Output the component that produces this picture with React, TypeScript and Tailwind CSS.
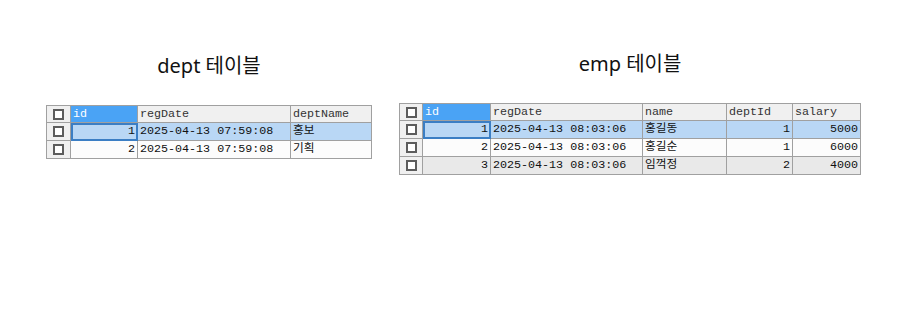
import React from 'react';

type Col = { key: string; w: number; right?: boolean };

const deptCols: Col[] = [
  { key: 'id', w: 67, right: true },
  { key: 'regDate', w: 153 },
  { key: 'deptName', w: 81 },
];

const deptRows = [
  ['1', '2025-04-13 07:59:08', '홍보'],
  ['2', '2025-04-13 07:59:08', '기획'],
];

const empCols: Col[] = [
  { key: 'id', w: 68, right: true },
  { key: 'regDate', w: 152 },
  { key: 'name', w: 84 },
  { key: 'deptId', w: 66, right: true },
  { key: 'salary', w: 68, right: true },
];

const empRows = [
  ['1', '2025-04-13 08:03:06', '홍길동', '1', '5000'],
  ['2', '2025-04-13 08:03:06', '홍길순', '1', '6000'],
  ['3', '2025-04-13 08:03:06', '임꺽정', '2', '4000'],
];

const Check: React.FC = () => (
  <div className="mx-auto h-[11px] w-[11px] border-2 border-[#5c5c5c] bg-white" />
);

const Grid: React.FC<{ cols: Col[]; rows: string[][]; checkW: number }> = ({ cols, rows, checkW }) => {
  return (
    <table
      className="table-fixed border-collapse border border-[#a0a0a0] text-[11.7px] leading-none"
      style={{ fontFamily: '"Liberation Mono", "Noto Sans CJK KR", monospace' }}
    >
      <colgroup>
        <col style={{ width: checkW }} />
        {cols.map((c) => (
          <col key={c.key} style={{ width: c.w }} />
        ))}
      </colgroup>
      <thead>
        <tr className="h-[17px]">
          <th className="border border-[#a0a0a0] bg-[#f0f0f0] p-0">
            <Check />
          </th>
          {cols.map((c, i) => (
            <th
              key={c.key}
              className={
                i === 0
                  ? 'border border-[#a0a0a0] bg-[#4aa3f5] px-[2px] pt-[1px] text-left font-normal text-white'
                  : 'border border-[#a0a0a0] bg-[#f0f0f0] px-[2px] pt-[1px] text-left font-normal text-[#333]'
              }
            >
              {c.key}
            </th>
          ))}
        </tr>
      </thead>
      <tbody>
        {rows.map((r, ri) => {
          const sel = ri === 0;
          const bg = sel ? 'bg-[#b9d7f5]' : ri === 2 ? 'bg-[#e9e9e9]' : 'bg-[#fcfcfc]';
          return (
            <tr key={ri} className="h-[18px]">
              <td className="border border-[#a0a0a0] bg-[#f0f0f0] p-0">
                <Check />
              </td>
              {r.map((v, ci) => (
                <td
                  key={ci}
                  className={`border border-[#a0a0a0] px-[2px] pt-[1px] text-[#111] ${bg} ${cols[ci].right ? 'text-right' : 'text-left'} ${
                    sel && ci === 0 ? 'outline-2 -outline-offset-2 outline-[#3b7ec4]' : ''
                  }`}
                >
                  {v}
                </td>
              ))}
            </tr>
          );
        })}
      </tbody>
    </table>
  );
};

const Section: React.FC<{ title: string; children: React.ReactNode }> = ({ title, children }) => (
  <div className="flex flex-col items-center">
    <h2
      className="mb-[25px] text-[20px] leading-[28px] text-[#111]"
      style={{ fontFamily: '"Noto Sans", "Noto Sans CJK KR", sans-serif' }}
    >
      {title}
    </h2>
    {children}
  </div>
);

export default function App() {
  return (
    <div className="h-[315px] w-[901px] bg-white">
      <div className="flex items-start pl-[46px] pt-[52px]">
        <Section title="dept 테이블">
          <Grid cols={deptCols} rows={deptRows} checkW={24} />
        </Section>
        <div className="ml-[27px] -mt-[2px]">
          <Section title="emp 테이블">
            <Grid cols={empCols} rows={empRows} checkW={23} />
          </Section>
        </div>
      </div>
    </div>
  );
}
